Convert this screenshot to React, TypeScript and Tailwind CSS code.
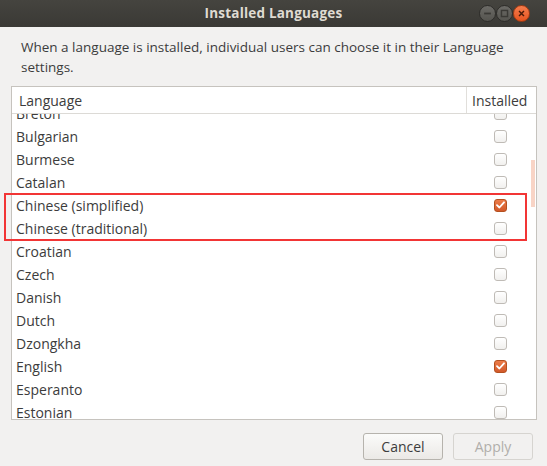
import React from "react";

type Lang = { name: string; installed: boolean };

const LANGS: Lang[] = [
  { name: "Breton", installed: false },
  { name: "Bulgarian", installed: false },
  { name: "Burmese", installed: false },
  { name: "Catalan", installed: false },
  { name: "Chinese (simplified)", installed: true },
  { name: "Chinese (traditional)", installed: false },
  { name: "Croatian", installed: false },
  { name: "Czech", installed: false },
  { name: "Danish", installed: false },
  { name: "Dutch", installed: false },
  { name: "Dzongkha", installed: false },
  { name: "English", installed: true },
  { name: "Esperanto", installed: false },
  { name: "Estonian", installed: false },
  { name: "Faroese", installed: false },
];

function Checkbox({ checked }: { checked: boolean }) {
  if (checked) {
    return (
      <span className="w-[13px] h-[13px] rounded-[3px] border border-[#b4501f] bg-gradient-to-b from-[#ec7c48] to-[#d2592a] flex items-center justify-center">
        <svg width="9" height="8" viewBox="0 0 9 8">
          <path d="M1 4.2 L3.4 6.5 L8 1.3" fill="none" stroke="#fff" strokeWidth="1.8" strokeLinecap="round" strokeLinejoin="round" />
        </svg>
      </span>
    );
  }
  return (
    <span className="w-[13px] h-[13px] rounded-[3px] border border-[#bfbbb6] bg-gradient-to-b from-white to-[#f1f0ee]" />
  );
}

function WinButton({ kind }: { kind: "min" | "max" | "close" }) {
  const base =
    kind === "close"
      ? "bg-gradient-to-b from-[#f47c4c] to-[#e5531d] border-[#a33a12]"
      : "bg-gradient-to-b from-[#6b6a66] to-[#55544f] border-[#2e2d2a]";
  return (
    <span className={`w-[17px] h-[17px] rounded-full border flex items-center justify-center ${base}`}>
      <svg width="9" height="9" viewBox="0 0 8 8">
        {kind === "min" && <path d="M1 4 H7" stroke="#3a3935" strokeWidth="1.6" />}
        {kind === "max" && <rect x="1.3" y="1.3" width="5.4" height="5.4" fill="none" stroke="#3a3935" strokeWidth="1.3" />}
        {kind === "close" && <path d="M1.8 1.8 L6.2 6.2 M6.2 1.8 L1.8 6.2" stroke="#4a1a08" strokeWidth="1.3" />}
      </svg>
    </span>
  );
}

export default function App() {
  return (
    <div
      className="relative w-[547px] h-[466px] bg-[#f2f1f0] flex flex-col overflow-hidden text-[#3c3c3c]"
      style={{ fontFamily: '"Open Sans", "Noto Sans", sans-serif' }}
    >
      {/* Title bar */}
      <div className="relative h-[27px] shrink-0 bg-gradient-to-b from-[#45443f] to-[#3a3935] flex items-center justify-center">
        <span className="text-[13.5px] font-bold text-[#dfdbd2] tracking-[0.2px]">Installed Languages</span>
        <div className="absolute right-[17px] top-[5px] flex gap-[0px]">
          <WinButton kind="min" />
          <WinButton kind="max" />
          <WinButton kind="close" />
        </div>
      </div>

      {/* Description */}
      <p className="pl-[21px] pr-[20px] pt-[10px] text-[13.5px] leading-[20px] h-[59px]">
        When a language is installed, individual users can choose it in their Language settings.
      </p>

      {/* List */}
      <div className="relative ml-[11px] w-[526px] h-[334px] border border-[#c6c3be] bg-white flex flex-col overflow-hidden">
        <div className="h-[27px] shrink-0 flex border-b border-[#dcdad6] text-[14px]">
          <div className="flex-1 pl-[7px] flex items-center">Language</div>
          <div className="w-[70px] border-l border-[#e1dfdb] pl-[5px] flex items-center">Installed</div>
        </div>
        <div className="flex-1 overflow-hidden">
          <div className="mt-[-12.5px]">
            {LANGS.map((l) => (
              <div key={l.name} className="h-[23px] flex items-center text-[14px]">
                <div className="flex-1 pl-[4px]">{l.name}</div>
                <div className="w-[70px] flex justify-center pr-[1px]">
                  <Checkbox checked={l.installed} />
                </div>
              </div>
            ))}
          </div>
        </div>
        {/* scrollbar thumb */}
        <div className="absolute right-[1px] top-[73px] w-[4px] h-[47px] bg-[#f8d4c6]" />
      </div>

      {/* Buttons */}
      <div className="flex justify-end gap-[10px] pr-[14px] pt-[13px]">
        <button className="w-[80px] h-[27px] rounded-[3px] border border-[#b6b3ad] bg-gradient-to-b from-[#fbfbfa] to-[#ebe9e6] text-[14px] text-[#3c3c3c]">
          Cancel
        </button>
        <button className="w-[80px] h-[27px] rounded-[3px] border border-[#d6d4d0] bg-[#f2f1f0] text-[14px] text-[#b0aeaa]">
          Apply
        </button>
      </div>

      {/* Highlight annotation */}
      <div className="absolute left-[4px] top-[193px] w-[523px] h-[48px] border-[2.5px] border-[#f23535] pointer-events-none" />
    </div>
  );
}
